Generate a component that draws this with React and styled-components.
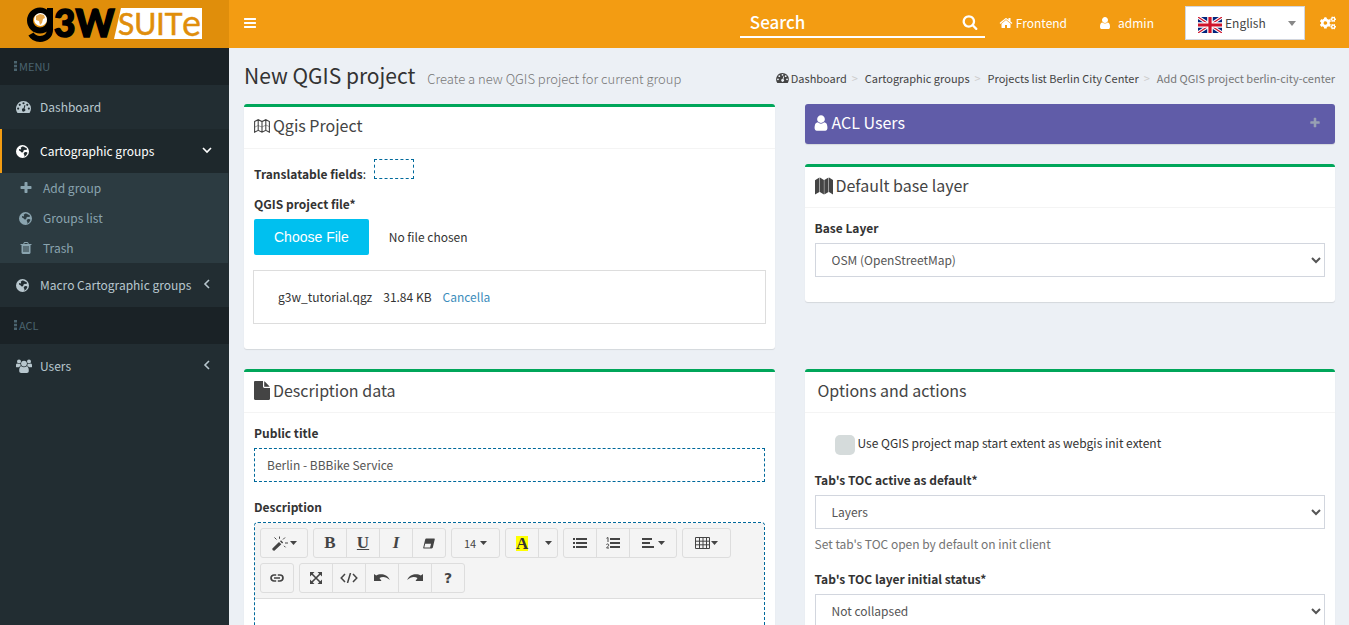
import React from "react";
import styled, { createGlobalStyle, css } from "styled-components";
import { FaCogs } from "react-icons/fa";

const sans = `"Noto Sans CJK SC", "Noto Sans", sans-serif`;

const GlobalStyle = createGlobalStyle`
  *, *::before, *::after { box-sizing: border-box; }
  html { scrollbar-width: none; }
  body {
    margin: 0;
    background: #ecf0f5;
    color: #333;
    font: 400 12px/20px ${sans};
  }
  a { color: inherit; text-decoration: none; }
  h1, h3, ul, ol, p { margin: 0; padding: 0; font-weight: 400; }
  ul, ol { list-style: none; }
  button, input, select { font: inherit; color: inherit; }
  svg { display: block; flex: none; }
`;

/* ---------- icons ---------- */

const PATHS = {
  bars: "M1664 1344v128q0 26-19 45t-45 19h-1408q-26 0-45-19t-19-45v-128q0-26 19-45t45-19h1408q26 0 45 19t19 45zm0-512v128q0 26-19 45t-45 19h-1408q-26 0-45-19t-19-45v-128q0-26 19-45t45-19h1408q26 0 45 19t19 45zm0-512v128q0 26-19 45t-45 19h-1408q-26 0-45-19t-19-45v-128q0-26 19-45t45-19h1408q26 0 45 19t19 45z",
  plus: "M1600 736v192q0 40-28 68t-68 28h-416v416q0 40-28 68t-68 28h-192q-40 0-68-28t-28-68v-416h-416q-40 0-68-28t-28-68v-192q0-40 28-68t68-28h416v-416q0-40 28-68t68-28h192q40 0 68 28t28 68v416h416q40 0 68 28t28 68z",
  user: "M1536 1399q0 109-62.5 187t-150.5 78h-854q-88 0-150.5-78t-62.5-187q0-85 8.5-160.5t31.5-152 58.5-131 94-89 134.5-34.5q131 128 313 128t313-128q76 0 134.5 34.5t94 89 58.5 131 31.5 152 8.5 160.5zm-256-887q0 159-112.5 271.5t-271.5 112.5-271.5-112.5-112.5-271.5 112.5-271.5 271.5-112.5 271.5 112.5 112.5 271.5z",
  home: "M1472 992v480q0 26-19 45t-45 19h-384v-384h-256v384h-384q-26 0-45-19t-19-45v-480q0-1 .5-3t.5-3l575-474 575 474q1 2 1 6zm223-69l-62 74q-8 9-21 11h-3q-13 0-21-7l-692-577-692 577q-12 8-24 7-13-2-21-11l-62-74q-8-10-7-23.5t11-21.5l719-599q32-26 76-26t76 26l244 204v-195q0-14 9-23t23-9h192q14 0 23 9t9 23v408l219 182q10 8 11 21.5t-7 23.5z",
  search: "M1216 832q0-185-131.5-316.5t-316.5-131.5-316.5 131.5-131.5 316.5 131.5 316.5 316.5 131.5 316.5-131.5 131.5-316.5zm512 832q0 52-38 90t-90 38q-54 0-90-38l-343-342q-179 124-399 124-143 0-273.5-55.5t-225-150-150-225-55.5-273.5 55.5-273.5 150-225 225-150 273.5-55.5 273.5 55.5 225 150 150 225 55.5 273.5q0 220-124 399l343 343q37 37 37 90z",
  trash: "M704 1376v-704q0-14-9-23t-23-9h-64q-14 0-23 9t-9 23v704q0 14 9 23t23 9h64q14 0 23-9t9-23zm256 0v-704q0-14-9-23t-23-9h-64q-14 0-23 9t-9 23v704q0 14 9 23t23 9h64q14 0 23-9t9-23zm256 0v-704q0-14-9-23t-23-9h-64q-14 0-23 9t-9 23v704q0 14 9 23t23 9h64q14 0 23-9t9-23zm-544-992h448l-48-117q-7-9-17-11h-317q-10 2-17 11zm928 32v64q0 14-9 23t-23 9h-96v948q0 83-47 143.5t-113 60.5h-832q-66 0-113-58.5t-47-141.5v-952h-96q-14 0-23-9t-9-23v-64q0-14 9-23t23-9h309l70-167q15-37 54-63t79-26h320q40 0 79 26t54 63l70 167h309q14 0 23 9t9 23z",
};

const Glyph = ({ name, size = 14 }) => (
  <svg width={size} height={size} viewBox="0 0 1792 1792" fill="currentColor" aria-hidden="true">
    <path d={PATHS[name]} />
  </svg>
);

const Art = ({ w, h, children }) => (
  <svg width={w} height={h} viewBox={`0 0 ${w} ${h}`} fill="currentColor" aria-hidden="true">
    {children}
  </svg>
);

const Angle = ({ open }) => (
  <Art w={10} h={12}>
    <path d={open ? "M1 3l4 4 4-4" : "M7 1L3 5l4 4"} fill="none" stroke="currentColor" strokeWidth="1.6" />
  </Art>
);

const Dots = () => (
  <Art w={3} h={10}>
    <path d="M0 0h3v2.500H0zM0 3.800h3v2.500H0zM0 7.500h3v2.500H0z" />
  </Art>
);

const Caret = () => (
  <Art w={7} h={4}>
    <path d="M0 0h7L3.500 4z" />
  </Art>
);

const Dial = ({ w = 15, h = 12 }) => (
  <svg width={w} height={h} viewBox="0 0 14 11" fill="currentColor" aria-hidden="true">
    <path
      fillRule="evenodd"
      d="M7 0a7 7 0 017 7c0 1.300-.4 2.600-1.100 3.700-.1.200-.2.300-.4.300h-11c-.2 0-.3-.1-.4-.3A7 7 0 017 0zM2 6a1 1 0 100 2 1 1 0 000-2zM3.500 2.500a1 1 0 100 2 1 1 0 000-2zM7 1a1 1 0 100 2 1 1 0 000-2zM10.500 2.500a1 1 0 100 2 1 1 0 000-2zM12 6a1 1 0 100 2 1 1 0 000-2zM7.900 3.700L7.100 6.700a1.500 1.500 0 10.900.3l.8-3z"
    />
  </svg>
);

const Globe = () => (
  <svg width="13" height="13" viewBox="0 0 12 12" fill="currentColor" aria-hidden="true">
    <path
      fillRule="evenodd"
      d="M6 0a6 6 0 110 12A6 6 0 016 0zM5.800 1.300L4.300 2.600l.5 1-.9.600-.5-.6-.7.300.3 1.400 1.200.5.600 1 1.200.2.800-1 .1-.9 1.300-.8.800.4 1.200-.5-.5-1.500-1.400-.300-.9-.7zM8.600 6.400L7.300 7.200l-.2 1 .8 1.200-.6 1.400 2-1.200 1.300-2.200-.5-.8z"
    />
  </svg>
);

const UsersIcon = () => (
  <Art w={16} h={14}>
    <circle cx="3" cy="2.600" r="2" />
    <circle cx="13" cy="2.600" r="2" />
    <path d="M0 8V6.500C0 5 .6 4.300 1.400 4.600c1.200.7 2.400.6 3.200.2C4.300 6 4.500 6.500 5 7.200c-1 0-1.700.4-2.200 1H1C.4 8.200 0 8.200 0 8zM16 8V6.500c0-1.500-.6-2.200-1.400-1.900-1.200.7-2.400.6-3.200.2.300 1.200.1 1.700-.4 2.400 1 0 1.700.4 2.200 1H15c.6 0 1 0 1-.2z" />
    <circle cx="8" cy="4.600" r="2.900" />
    <path d="M3.200 11.800c0-2.300.6-4.500 2.200-4.500 1.600 1.300 3.600 1.300 5.200 0 1.600 0 2.200 2.200 2.200 4.500 0 1.400-.8 2.200-2 2.200H5.200c-1.200 0-2-.8-2-2.200z" />
  </Art>
);

const MapOutline = () => (
  <Art w={16} h={14}>
    <path d="M.6 2.600l3.600-1.900 3.800 1.900 3.800-1.900 3.600 1.900v10.600l-3.600-1.900L8 13.200l-3.800-1.900L.6 13.200zM4.200.7v10.600M8 2.600v10.600M11.800.7v10.600" fill="none" stroke="currentColor" strokeWidth="1.100" />
    <path d="M1 8l3-1.500L8 8l4-2 3 1.500" fill="none" stroke="currentColor" strokeWidth=".5" />
  </Art>
);

const MapSolid = () => (
  <Art w={18} h={18}>
    <path d="M0 3.200L4.400.4v14.500L0 17.600zM4.900.4l4 2.500v14.700l-4-2.500zM9.300 3l4.200-2.600v14.500l-4.200 2.700zM14 .4l4 2.500v14.700l-4-2.500z" />
  </Art>
);

const FileIcon = () => (
  <Art w={16} h={19}>
    <path d="M0 1.200C0 .5.500 0 1.200 0H9v5.600C9 6.400 9.600 7 10.400 7H16v10.800c0 .7-.5 1.200-1.200 1.200H1.200C.5 19 0 18.500 0 17.800zM10.200.3c.3.100.6.300.8.500l4.100 4.100c.2.200.4.500.5.900h-5.400z" />
  </Art>
);

const Flag = () => (
  <svg width="24" height="16" viewBox="0 0 24 16" aria-hidden="true">
    <path fill="#00247d" d="M0 0h24v16H0z" />
    <path d="M0 0l24 16M24 0L0 16" stroke="#fff" strokeWidth="3.400" />
    <path d="M0 0l24 16M24 0L0 16" stroke="#cf142b" strokeWidth="1.200" />
    <path d="M12 0v16M0 8h24" stroke="#fff" strokeWidth="5.600" />
    <path d="M12 0v16M0 8h24" stroke="#cf142b" strokeWidth="3.200" />
  </svg>
);

/* toolbar drawings */
const Magic = () => (
  <Art w={17} h={15}>
    <path d="M.4 12.500L7 6l2.300 2.300-6.600 6.200c-1.200.8-3-.9-2.300-2z" />
    <path d="M8 5.200l1-1 2.200 2.200-1.100 1z" />
    <path d="M2.500 1.500l2 2M7.500.5v2.300M13 1.500l-2 2M13 7h3M12 9.800l1.500 1.500" stroke="currentColor" strokeWidth="1" fill="none" />
  </Art>
);
const Eraser = () => (
  <Art w={12} h={11}>
    <path fillRule="evenodd" d="M3.500.5h7.700c.5 0 .7.3.6.8l-1.900 8c-.1.700-.6 1.200-1.300 1.200H.8c-.5 0-.7-.3-.6-.8l1.900-8C2.300 1 2.800.5 3.500.5zM2.200 5.800l-.9 3.600h5.800L8 5.800z" />
  </Art>
);
const ListUl = () => (
  <Art w={14} h={10}>
    <path d="M0 0h2v2H0zM0 4h2v2H0zM0 8h2v2H0zM3 0h11v2H3zM3 4h11v2H3zM3 8h11v2H3z" />
  </Art>
);
const ListOl = () => (
  <Art w={14} h={12}>
    <path d="M4 1h10v2H4zM4 5h10v2H4zM4 9h10v2H4z" />
    <path d="M.5 1.300L2 .5V5M.3 7.700C1 6.500 3 6.900 2.700 8.200 2.500 9.200 1 10 .6 11H3" fill="none" stroke="currentColor" strokeWidth="1" />
  </Art>
);
const AlignLeft = () => (
  <Art w={13} h={10}>
    <path d="M0 0h10v2H0zM0 4h8v2H0zM0 8h12v2H0z" />
  </Art>
);
const TableIcon = () => (
  <Art w={15} h={12}>
    <path d="M.5.5h14v11H.5zM4.500.5v11M8 .5v11M11.500.5v11M.5 4.200h14M.5 7.800h14" fill="none" stroke="currentColor" />
  </Art>
);
const LinkIcon = () => (
  <Art w={14} h={8}>
    <path d="M6.200 1H4a3 3 0 000 6h2.200M7.800 1H10a3 3 0 010 6H7.800M4 4h6" fill="none" stroke="currentColor" strokeWidth="1.700" />
  </Art>
);
const Expand = () => (
  <Art w={12} h={12}>
    <path d="M0 0h4.500L0 4.500zM12 0v4.500L7.500 0zM0 12V7.500L4.500 12zM12 12H7.500L12 7.500z" />
    <path d="M1.500 1.500l9 9M10.500 1.500l-9 9" stroke="currentColor" strokeWidth="1.600" />
  </Art>
);
const Code = () => (
  <Art w={18} h={10}>
    <path d="M5 1L1.200 5 5 9M13 1l3.800 4L13 9M10.500 0l-3 10" fill="none" stroke="currentColor" strokeWidth="1.500" />
  </Art>
);
const Undo = ({ flip }) => (
  <Art w={16} h={8}>
    <path
      transform={flip ? "matrix(-1 0 0 1 16 0)" : undefined}
      d="M0 0l2.200 1.600C5.500-.6 13-.6 15.800 6 12.500 2.600 8.500 2.200 5.500 3.900L7.500 7 0 7z"
    />
  </Art>
);

/* ---------- header ---------- */

const Header = styled.header`
  display: flex;
  height: 48px;
  background: #f39c12;
  color: #fff;
`;

const Brand = styled.a`
  flex: none;
  width: 229px;
  background: #e08e0b;
`;

const Nav = styled.nav`
  flex: 1;
  display: flex;
  align-items: center;
  padding: 0 13px 2px 14px;
`;

const MenuToggle = styled.button`
  display: flex;
  padding: 0;
  border: 0;
  background: none;
  margin-right: auto;
`;

const SearchForm = styled.form`
  display: flex;
  align-items: center;
  width: 245px;
  height: 30px;
  padding: 0 7px 0 10px;
  border-bottom: 2px solid #fff;
  margin-right: 14px;

  button {
    display: flex;
    padding: 0;
    border: 0;
    background: none;
  }
`;

const SearchInput = styled.input`
  flex: 1;
  min-width: 0;
  padding: 0;
  border: 0;
  outline: 0;
  background: none;
  font-size: 17px;
  line-height: 28px;
  font-weight: 500;

  &::placeholder {
    color: #fff;
    opacity: 1;
  }
`;

const NavLink = styled.a`
  display: flex;
  align-items: center;
  gap: ${(p) => p.$gap}px;
  margin-right: 31px;
`;

const Language = styled.div`
  position: relative;
  width: 120px;
  height: 34px;
  margin-right: 15px;
  color: #444;

  svg {
    position: absolute;
    pointer-events: none;
  }
  svg:first-child {
    left: 13px;
    top: 11px;
  }
  svg:last-child {
    right: 9px;
    top: 15px;
    color: #888;
  }
`;

const LanguageSelect = styled.select`
  appearance: none;
  width: 100%;
  height: 100%;
  padding: 0 20px 0 39px;
  border: 1px solid #d2d6de;
  border-radius: 0;
  background: #fff;
`;

const Logo = () => (
  <svg width="229" height="48" viewBox="0 0 229 48" role="img" aria-label="g3w suite">
    <path fill="#fff" d="M121 8h81v31h-88z" />
    <g fill="none" stroke="#000" strokeWidth="6">
      <circle cx="40" cy="20.500" r="10" />
      <path d="M50 8v22c0 5-4 9-10 9-4 0-7-1.500-9-5" />
    </g>
    <circle cx="40.500" cy="19.500" r="6.500" fill="#fff" />
    <path d="M36 16l4-2 4 1 1 3-2 1-1 4-2 2-1-4-3-1z" fill="#e9a84c" />
    <text x="54" y="37" fontFamily="Lato" fontWeight="900" fontSize="37" stroke="#000" strokeWidth="1.500">3W</text>
    <text x="118" y="35" fontFamily="Lato" fontWeight="400" fontSize="30" fill="#e08e0b" stroke="#e08e0b" strokeWidth=".6">SUIT</text>
    <text x="182" y="36" fontFamily="Lato" fontWeight="400" fontSize="36" fill="#e08e0b" stroke="#e08e0b" strokeWidth=".3">e</text>
  </svg>
);

/* ---------- sidebar ---------- */

const Shell = styled.div`
  display: flex;
  min-height: calc(100vh - 48px);
`;

const Sidebar = styled.aside`
  flex: none;
  width: 229px;
  background: #222d32;
  color: #b8c7ce;
`;

const Section = styled.div`
  display: flex;
  align-items: center;
  gap: 2px;
  height: 37px;
  padding: 0 0 2px 14px;
  background: #1a2226;
  color: #4b646f;
  font-size: 11px;
`;

const MenuLink = styled.a`
  display: flex;
  align-items: center;
  height: 44px;
  padding: 0 17px 0 14px;
  border-left: 2px solid transparent;
  ${(p) =>
    p.$active &&
    css`
      border-color: #f39c12;
      background: #1e282c;
      color: #fff;
    `}
`;

const IconSlot = styled.span`
  display: flex;
  flex: none;
  width: 24px;
`;

const Grow = styled.span`
  flex: 1;
  white-space: nowrap;
`;

const SubMenu = styled.ul`
  margin-right: 1px;
  background: #2c3b41;
  color: #8aa4af;

  a {
    display: flex;
    align-items: center;
    height: 30px;
    padding-left: 19px;
  }
`;

/* ---------- content ---------- */

const Content = styled.main`
  flex: 1;
  min-width: 0;
  padding: 13px 14px 20px 15px;
`;

const PageHead = styled.div`
  display: flex;
  justify-content: space-between;
  align-items: flex-start;
  height: 30px;
  margin-bottom: 13px;
`;

const Title = styled.h1`
  font-size: 21px;
  line-height: 29px;
  white-space: nowrap;

  small {
    margin-left: 12px;
    font-size: 13px;
    font-weight: 300;
    color: #777;
  }
`;

const Crumbs = styled.ol`
  display: flex;
  align-items: center;
  font-size: 11px;
  padding-top: 7px;
  color: #444;
  white-space: nowrap;

  li {
    display: flex;
    align-items: center;
    gap: 2px;
  }
  li + li::before {
    content: ">";
    width: 16px;
    text-align: center;
    color: #ccc;
  }
  li:last-child {
    color: #777;
  }
`;

const Columns = styled.div`
  display: grid;
  grid-template-columns: 1fr 1fr;
  gap: 20px 30px;
`;

const Stack = styled.div`
  display: flex;
  flex-direction: column;
  gap: 20px;
`;

const Box = styled.section`
  background: #fff;
  border-top: 3px solid #00a65a;
  border-radius: 3px;
  box-shadow: 0 1px 1px rgba(0, 0, 0, 0.1);
`;

const BoxHead = styled.div`
  display: flex;
  align-items: center;
  gap: 3px;
  height: ${(p) => p.$height || 41}px;
  padding: 0 ${(p) => p.$pad || 10}px 3px;
  border-bottom: 1px solid #f4f4f4;
  color: #444;
`;

const BoxTitle = styled.h3`
  padding-bottom: 2px;
  font-size: 16px;
  line-height: 22px;
`;

const AclBox = styled.section`
  display: flex;
  align-items: center;
  gap: 2px;
  height: 40px;
  padding: 0 14px 2px 7px;
  border-radius: 3px;
  background: #605ca8;
  color: #fff;
  box-shadow: 0 1px 1px rgba(0, 0, 0, 0.1);

  button {
    display: flex;
    margin-left: auto;
    padding: 0;
    border: 0;
    background: none;
    color: #97a0b3;
  }
`;

const BoxBody = styled.div`
  padding: 10px 10px 25px;
`;

const Label = styled.label`
  display: block;
  margin-bottom: 5px;
  font-weight: 700;
`;

const Legend = styled.p`
  display: flex;
  align-items: flex-end;
  gap: 8px;
  height: 25px;
  margin-bottom: 10px;

  i {
    width: 40px;
    height: 20px;
    border: 1px dashed #00699b;
    align-self: flex-start;
  }
`;

const FileInput = styled.input`
  display: block;
  width: 100%;
  height: 36px;
  color: #333;

  &::file-selector-button {
    height: 36px;
    margin: 0 20px 0 0;
    padding: 0 20px;
    border: 0;
    border-radius: 2px;
    background: #00c0ef;
    color: #fff;
    font: 14px "Liberation Sans", sans-serif;
  }
`;

const Upload = styled.div`
  display: flex;
  align-items: center;
  gap: 11px;
  height: 54px;
  margin: 15px -1px 0;
  padding: 0 24px;
  border: 1px solid #ddd;

  a {
    color: #3c8dbc;
  }
`;

const control = css`
  display: block;
  width: 100%;
  height: 34px;
  padding: 5px 12px 7px;
  border: 1px solid #d2d6de;
  border-radius: 0;
  background: #fff;
  color: #555;
`;

const Select = styled.select`
  ${control}
`;

const TextInput = styled.input`
  ${control}
  border: 1px dashed #00699b;
  margin-bottom: 15px;
`;

const Field = styled.div`
  margin-bottom: ${(p) => p.$mb || 0}px;
`;

const Help = styled.p`
  margin-top: 5px;
  color: #737373;
`;

const CheckRow = styled.div`
  display: flex;
  align-items: flex-start;
  gap: 3px;
  padding: 10px 0 0 20px;
  margin-bottom: 15px;

  input {
    appearance: none;
    width: 20px;
    height: 20px;
    margin: 2px 0 0;
    border-radius: 5px;
    background: #d5dbdb;
  }
`;

const Editor = styled.div`
  border: 1px dashed #00699b;
  border-radius: 4px;
  overflow: hidden;
`;

const Toolbar = styled.div`
  display: flex;
  flex-wrap: wrap;
  gap: 5px;
  padding: 5px;
  background: #f4f4f4;
  border-bottom: 1px solid #ddd;
`;

const Group = styled.div`
  display: flex;
  border: 1px solid #ddd;
  border-radius: 3px;

  button + button {
    border-left: 1px solid #ddd;
  }
`;

const Tool = styled.button`
  box-sizing: content-box;
  display: flex;
  align-items: center;
  justify-content: center;
  gap: ${(p) => p.$gap || 1}px;
  width: ${(p) => p.$w || 32}px;
  height: 28px;
  padding: 0;
  border: 0;
  background: none;
  color: #444;
`;

const Letter = styled.span`
  font: ${(p) => (p.$italic ? "italic" : "normal")} 700 17px/18px "Liberation Serif", serif;
  text-decoration: ${(p) => (p.$under ? "underline" : "none")};
`;

const Marker = styled(Letter)`
  width: 12px;
  background: #ff0;
  line-height: 15px;
  text-align: center;
  color: #333;
`;

const Question = styled.span`
  font: 700 14px/16px "DejaVu Sans", sans-serif;
`;

const FontSize = styled.span`
  font-size: 11px;
`;

const Writing = styled.div`
  min-height: 150px;
  outline: 0;
  background: #fff;
`;

export default function App() {
  return (
    <>
      <GlobalStyle />
      <Header>
        <Brand href="#"><Logo /></Brand>
        <Nav>
          <MenuToggle type="button" aria-label="Toggle navigation"><Glyph name="bars" /></MenuToggle>
          <SearchForm role="search">
            <SearchInput type="text" placeholder="Search" aria-label="Search" />
            <button type="button" aria-label="Run search"><Glyph name="search" size={16} /></button>
          </SearchForm>
          <NavLink href="#" $gap={3}><Glyph name="home" /><span>Frontend</span></NavLink>
          <NavLink href="#" $gap={6}><Glyph name="user" /><span>admin</span></NavLink>
          <Language>
            <Flag />
            <LanguageSelect aria-label="Language" defaultValue="en">
              <option value="en">English</option>
            </LanguageSelect>
            <Art w={8} h={5}><path d="M0 0h8L4 5z" /></Art>
          </Language>
          <a href="#" aria-label="Settings"><FaCogs size={16} /></a>
        </Nav>
      </Header>
      <Shell>
        <Sidebar>
          <Section><Dots />MENU</Section>
          <MenuLink href="#"><IconSlot><Dial /></IconSlot><Grow>Dashboard</Grow></MenuLink>
          <MenuLink href="#" $active>
            <IconSlot><Globe /></IconSlot><Grow>Cartographic groups</Grow><Angle open />
          </MenuLink>
          <SubMenu>
            <li><a href="#"><IconSlot><Glyph name="plus" /></IconSlot>Add group</a></li>
            <li><a href="#"><IconSlot><Globe /></IconSlot>Groups list</a></li>
            <li><a href="#"><IconSlot><Glyph name="trash" /></IconSlot>Trash</a></li>
          </SubMenu>
          <MenuLink href="#">
            <IconSlot><Globe /></IconSlot><Grow>Macro Cartographic groups</Grow><Angle />
          </MenuLink>
          <Section><Dots />ACL</Section>
          <MenuLink href="#"><IconSlot><UsersIcon /></IconSlot><Grow>Users</Grow><Angle /></MenuLink>
        </Sidebar>
        <Content>
          <PageHead>
            <Title>New QGIS project<small>Create a new QGIS project for current group</small></Title>
            <Crumbs>
              <li><Dial w={13} h={10} /><a href="#">Dashboard</a></li>
              <li><a href="#">Cartographic groups</a></li>
              <li><a href="#">Projects list Berlin City Center</a></li>
              <li>Add QGIS project berlin-city-center</li>
            </Crumbs>
          </PageHead>
          <Columns>
            <Box>
              <BoxHead $height={42}><MapOutline /><BoxTitle>Qgis Project</BoxTitle></BoxHead>
              <BoxBody>
                <Legend><span><b>Translatable fields</b>:</span><i /></Legend>
                <Label htmlFor="project-file">QGIS project file*</Label>
                <FileInput id="project-file" type="file" />
                <Upload><span>g3w_tutorial.qgz</span><span>31.84 KB</span><a href="#">Cancella</a></Upload>
              </BoxBody>
            </Box>
            <Stack>
              <AclBox>
                <Glyph name="user" size={18} />
                <BoxTitle>ACL Users</BoxTitle>
                <button type="button" aria-label="Expand"><Glyph name="plus" size={12} /></button>
              </AclBox>
              <Box>
                <BoxHead><MapSolid /><BoxTitle>Default base layer</BoxTitle></BoxHead>
                <BoxBody>
                  <Label htmlFor="base-layer">Base Layer</Label>
                  <Select id="base-layer"><option>OSM (OpenStreetMap)</option></Select>
                </BoxBody>
              </Box>
            </Stack>
            <Box>
              <BoxHead><FileIcon /><BoxTitle>Description data</BoxTitle></BoxHead>
              <BoxBody>
                <Label htmlFor="public-title">Public title</Label>
                <TextInput id="public-title" type="text" defaultValue="Berlin - BBBike Service" />
                <Label as="p" id="description-label">Description</Label>
                <Editor>
                  <Toolbar>
                    <Group><Tool type="button" aria-label="Style" $w={46}><Magic /><Caret /></Tool></Group>
                    <Group>
                      <Tool type="button"><Letter>B</Letter></Tool>
                      <Tool type="button"><Letter $under>U</Letter></Tool>
                      <Tool type="button"><Letter $italic>I</Letter></Tool>
                      <Tool type="button" aria-label="Remove style"><Eraser /></Tool>
                    </Group>
                    <Group><Tool type="button" $w={47} $gap={4}><FontSize>14</FontSize><Caret /></Tool></Group>
                    <Group>
                      <Tool type="button"><Marker>A</Marker></Tool>
                      <Tool type="button" aria-label="More colors" $w={18}><Caret /></Tool>
                    </Group>
                    <Group>
                      <Tool type="button" aria-label="Bullet list"><ListUl /></Tool>
                      <Tool type="button" aria-label="Numbered list"><ListOl /></Tool>
                      <Tool type="button" aria-label="Paragraph" $w={46} $gap={3}><AlignLeft /><Caret /></Tool>
                    </Group>
                    <Group><Tool type="button" aria-label="Table" $w={47}><TableIcon /><Caret /></Tool></Group>
                    <Group><Tool type="button" aria-label="Link"><LinkIcon /></Tool></Group>
                    <Group>
                      <Tool type="button" aria-label="Full screen"><Expand /></Tool>
                      <Tool type="button" aria-label="Code view"><Code /></Tool>
                      <Tool type="button" aria-label="Undo"><Undo /></Tool>
                      <Tool type="button" aria-label="Redo"><Undo flip /></Tool>
                      <Tool type="button"><Question>?</Question></Tool>
                    </Group>
                  </Toolbar>
                  <Writing contentEditable role="textbox" aria-labelledby="description-label" />
                </Editor>
              </BoxBody>
            </Box>
            <Box>
              <BoxHead $pad={13}><BoxTitle>Options and actions</BoxTitle></BoxHead>
              <BoxBody>
                <CheckRow>
                  <input id="init-extent" type="checkbox" />
                  <label htmlFor="init-extent">Use QGIS project map start extent as webgis init extent</label>
                </CheckRow>
                <Field $mb={15}>
                  <Label htmlFor="toc-tab">Tab's TOC active as default*</Label>
                  <Select id="toc-tab"><option>Layers</option></Select>
                  <Help>Set tab's TOC open by default on init client</Help>
                </Field>
                <Field>
                  <Label htmlFor="toc-status">Tab's TOC layer initial status*</Label>
                  <Select id="toc-status"><option>Not collapsed</option></Select>
                </Field>
              </BoxBody>
            </Box>
          </Columns>
        </Content>
      </Shell>
    </>
  );
}
